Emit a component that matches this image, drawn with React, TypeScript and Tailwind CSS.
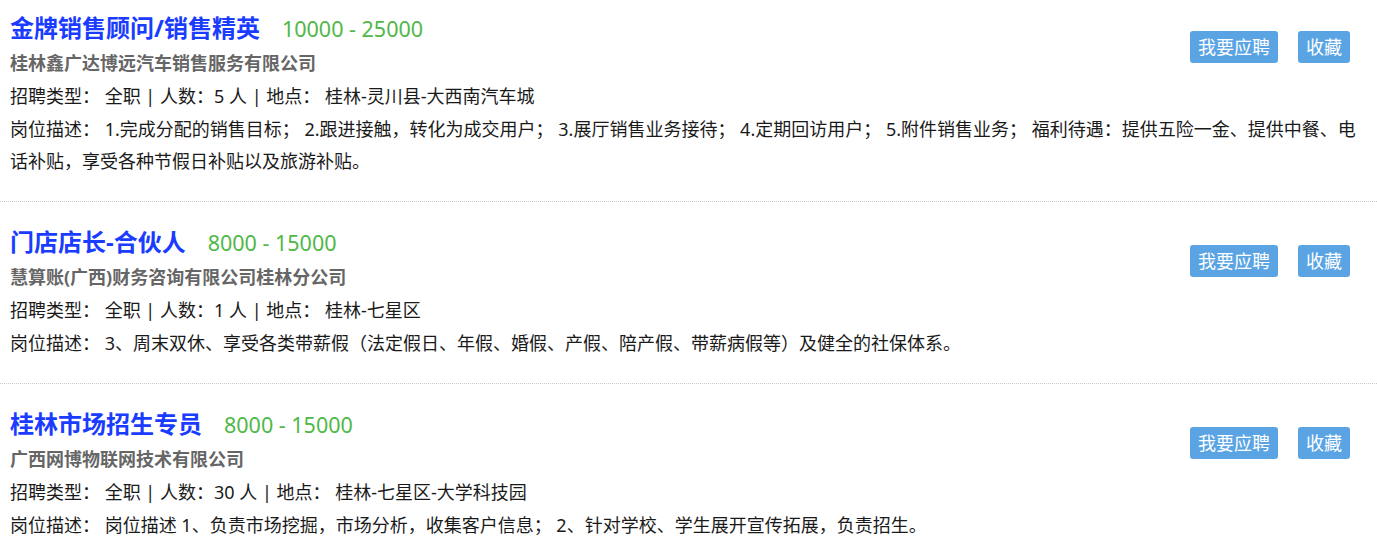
const jobs = [
  {
    title: "金牌销售顾问/销售精英",
    salary: "10000 - 25000",
    company: "桂林鑫广达博远汽车销售服务有限公司",
    count: "5",
    place: "桂林-灵川县-大西南汽车城",
    desc: "1.完成分配的销售目标； 2.跟进接触，转化为成交用户； 3.展厅销售业务接待； 4.定期回访用户； 5.附件销售业务； 福利待遇：提供五险一金、提供中餐、电话补贴，享受各种节假日补贴以及旅游补贴。",
  },
  {
    title: "门店店长-合伙人",
    salary: "8000 - 15000",
    company: "慧算账(广西)财务咨询有限公司桂林分公司",
    count: "1",
    place: "桂林-七星区",
    desc: "3、周末双休、享受各类带薪假（法定假日、年假、婚假、产假、陪产假、带薪病假等）及健全的社保体系。",
  },
  {
    title: "桂林市场招生专员",
    salary: "8000 - 15000",
    company: "广西网博物联网技术有限公司",
    count: "30",
    place: "桂林-七星区-大学科技园",
    desc: "岗位描述 1、负责市场挖掘，市场分析，收集客户信息； 2、针对学校、学生展开宣传拓展，负责招生。",
  },
];

export default function App() {
  return (
    <div className="bg-white w-[1377px] h-[546px] overflow-hidden font-['Noto_Sans','Noto_Sans_CJK_SC',sans-serif]">
      <ul className="-mt-[12px]">
        {jobs.map((job, i) => (
          <li
            key={i}
            className="pl-[10px] pr-[20px] pt-[21px] pb-[24px] border-b border-dotted border-[#c8c8c8]"
          >
            {/* top: title, company, info + buttons */}
            <div className="flex justify-between items-start">
              <div>
                <div className="flex items-baseline h-[38px] leading-[38px]">
                  <a className="text-[24px] font-bold text-[#1a3cff]">{job.title}</a>
                  <span className="ml-[22px] text-[21.5px] text-[#4fb848]">{job.salary}</span>
                </div>
                <p className="text-[18px] leading-[33px] font-bold text-[#666]">{job.company}</p>
                <p className="text-[18px] leading-[33px] text-[#1a1a1a]">
                  招聘类型： 全职 | 人数：{job.count} 人 | 地点： {job.place}
                </p>
              </div>
              <div className="flex gap-[20px] mt-[22px] mr-[7px]">
                <button className="bg-[#5aa4e4] text-white text-[18px] leading-[32px] px-[8px] rounded-[3px]">
                  我要应聘
                </button>
                <button className="bg-[#5aa4e4] text-white text-[18px] leading-[32px] px-[8px] rounded-[3px]">
                  收藏
                </button>
              </div>
            </div>
            <p className="text-[18px] leading-[32px] text-[#1a1a1a]">岗位描述： {job.desc}</p>
          </li>
        ))}
      </ul>
    </div>
  );
}
